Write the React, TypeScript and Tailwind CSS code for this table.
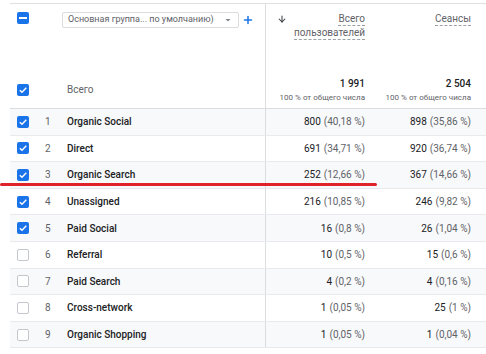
import { Plus, ArrowDown } from "lucide-react";

type Row = {
  n: number;
  name: string;
  users: string;
  usersPct: string;
  sessions: string;
  sessionsPct: string;
  checked: boolean;
};

const rows: Row[] = [
  { n: 1, name: "Organic Social", users: "800", usersPct: "(40,18 %)", sessions: "898", sessionsPct: "(35,86 %)", checked: true },
  { n: 2, name: "Direct", users: "691", usersPct: "(34,71 %)", sessions: "920", sessionsPct: "(36,74 %)", checked: true },
  { n: 3, name: "Organic Search", users: "252", usersPct: "(12,66 %)", sessions: "367", sessionsPct: "(14,66 %)", checked: true },
  { n: 4, name: "Unassigned", users: "216", usersPct: "(10,85 %)", sessions: "246", sessionsPct: "(9,82 %)", checked: true },
  { n: 5, name: "Paid Social", users: "16", usersPct: "(0,8 %)", sessions: "26", sessionsPct: "(1,04 %)", checked: true },
  { n: 6, name: "Referral", users: "10", usersPct: "(0,5 %)", sessions: "15", sessionsPct: "(0,6 %)", checked: false },
  { n: 7, name: "Paid Search", users: "4", usersPct: "(0,2 %)", sessions: "4", sessionsPct: "(0,16 %)", checked: false },
  { n: 8, name: "Cross-network", users: "1", usersPct: "(0,05 %)", sessions: "25", sessionsPct: "(1 %)", checked: false },
  { n: 9, name: "Organic Shopping", users: "1", usersPct: "(0,05 %)", sessions: "1", sessionsPct: "(0,04 %)", checked: false },
];

const CheckBox = ({ checked }: { checked: boolean }) =>
  checked ? (
    <div className="w-[12px] h-[12px] rounded-[2px] bg-[#1a73e8] flex items-center justify-center">
      <svg width="10" height="10" viewBox="0 0 10 10">
        <path d="M1.8 5.2 L4 7.3 L8.3 2.8" stroke="white" strokeWidth="1.4" fill="none" />
      </svg>
    </div>
  ) : (
    <div className="w-[12px] h-[12px] rounded-[2px] border border-[#c4c7cc] bg-white" />
  );

const App = () => {
  return (
    <div className="relative w-[486px] h-[354px] bg-white overflow-hidden font-['Roboto',sans-serif]">
      <div className="ml-[10px] mt-[3px] border-t border-[#e0e0e0]">
        {/* header */}
        <div className="flex h-[105px] border-b border-[#dadce0]">
          <div className="w-[256px] border-r border-[#dadce0] flex flex-col">
            <div className="flex items-start pt-[8px]">
              <div className="ml-[7px] w-[12px] h-[12px] rounded-[2px] bg-[#1a73e8] flex items-center justify-center">
                <div className="w-[8px] h-[2px] bg-white" />
              </div>
              <div className="ml-[33px] w-[177px] h-[16px] border border-[#dadce0] rounded-[2px] flex items-center pl-[5px] text-[9px] text-[#5f6368] whitespace-nowrap">
                <span className="flex-1">Основная группа... по умолчанию)</span>
                <svg width="8" height="8" viewBox="0 0 8 8" className="shrink-0 mr-[6px]">
                  <path d="M1.5 3 L6.5 3 L4 5.5 Z" fill="#80868b" />
                </svg>
              </div>
              <Plus className="ml-[3px] mt-[2px] text-[#1a73e8]" size={12} strokeWidth={3} />
            </div>
            <div className="mt-auto mb-[11px] flex items-center">
              <div className="ml-[7px]">
                <CheckBox checked />
              </div>
              <span className="ml-[38px] text-[10px] text-[#5f6368]">Всего</span>
            </div>
          </div>
          <div className="w-[112px] flex flex-col pr-[13px]">
            <div className="flex pt-[8px]">
              <ArrowDown className="ml-[11px] mt-[2px] text-[#3c4043]" size={10} strokeWidth={2.5} />
              <div className="ml-auto flex flex-col items-end text-[10px] text-[#5f6368] leading-[13px]">
                <span className="border-b border-dashed border-[#9aa0a6]">Всего</span>
                <span className="border-b border-dashed border-[#9aa0a6]">пользователей</span>
              </div>
            </div>
            <div className="mt-auto mb-[5px] flex flex-col items-end">
              <span className="text-[10px] font-medium text-[#202124] leading-[13px]">1 991</span>
              <span className="mt-[3px] text-[8px] text-[#5f6368] leading-[10px]">100 % от общего числа</span>
            </div>
          </div>
          <div className="flex-1 flex flex-col pr-[15px]">
            <div className="flex pt-[8px] justify-end">
              <span className="text-[10px] text-[#5f6368] leading-[13px] border-b border-dashed border-[#9aa0a6]">Сеансы</span>
            </div>
            <div className="mt-auto mb-[5px] flex flex-col items-end">
              <span className="text-[10px] font-medium text-[#202124] leading-[13px]">2 504</span>
              <span className="mt-[3px] text-[8px] text-[#5f6368] leading-[10px]">100 % от общего числа</span>
            </div>
          </div>
        </div>

        {/* rows */}
        {rows.map((r) => (
          <div
            key={r.n}
            className={`flex h-[26.6px] border-b border-[#e8eaed] ${r.n % 2 === 1 ? "bg-[#f8f9fa]" : "bg-white"}`}
          >
            <div className="w-[256px] border-r border-[#dadce0] flex items-center">
              <div className="ml-[7px]">
                <CheckBox checked={r.checked} />
              </div>
              <span className="w-[20px] ml-[16px] text-[10px] text-[#5f6368]">{r.n}</span>
              <span className="ml-[2px] text-[10px] font-medium text-[#202124]">{r.name}</span>
            </div>
            <div className="w-[112px] flex items-center justify-end pr-[13px] text-[10px]">
              <span className="text-[#202124]">{r.users}</span>
              <span className="ml-[3px] text-[#5f6368]">{r.usersPct}</span>
            </div>
            <div className="flex-1 flex items-center justify-end pr-[15px] text-[10px]">
              <span className="text-[#202124]">{r.sessions}</span>
              <span className="ml-[3px] text-[#5f6368]">{r.sessionsPct}</span>
            </div>
          </div>
        ))}
      </div>

      {/* red underline annotation */}
      <div className="absolute left-0 top-[183px] w-[377px] h-[3px] rounded-full bg-[#e0232b]" />
    </div>
  );
};

export default App;
